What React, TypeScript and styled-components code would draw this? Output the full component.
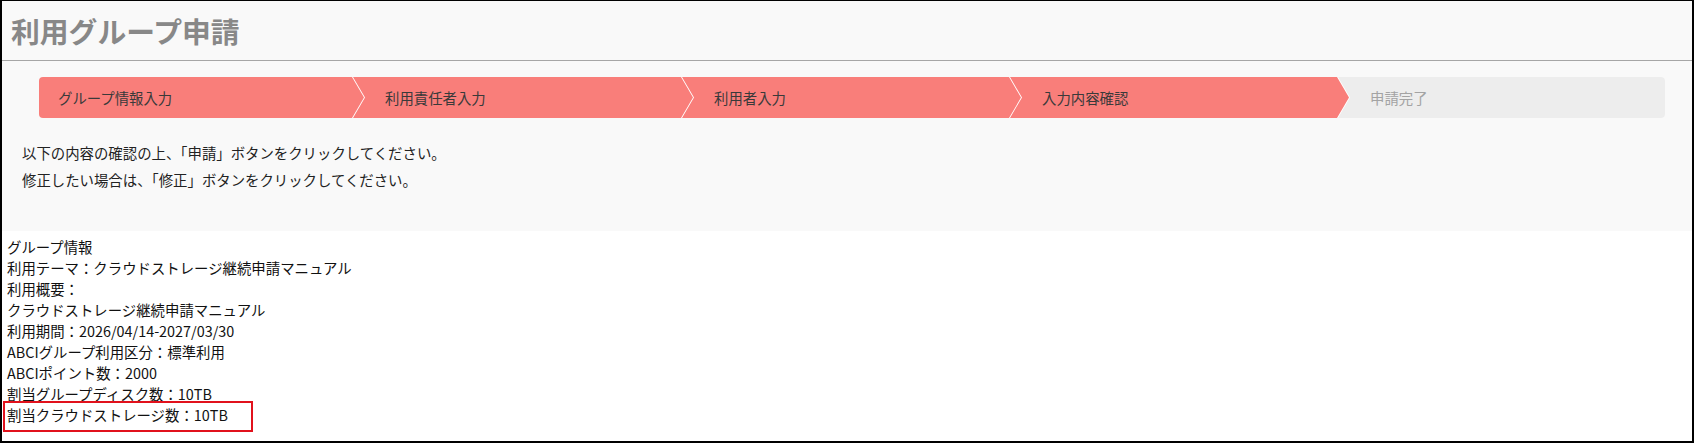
import styled, { createGlobalStyle } from 'styled-components';

const GlobalStyle = createGlobalStyle`
  body {
    margin: 0;
    background: #fff;
    font-family: "Noto Sans CJK JP", "Noto Sans", sans-serif;
  }
`;

const Frame = styled.div`
  width: 1694px;
  height: 443px;
  box-sizing: border-box;
  border: solid #000;
  border-width: 1px 2px 2px 2px;
  background: #fff;
  overflow: hidden;
`;

const TopPanel = styled.div`
  height: 230px;
  background: #f9f9f9;
`;

const Header = styled.div`
  height: 59px;
  border-bottom: 1px solid #a6a6a6;
  padding-left: 9px;
`;

const Title = styled.h1`
  margin: 0;
  font-size: 28.8px;
  font-weight: 700;
  line-height: 59px;
  color: #888;
`;

const Steps = styled.div`
  display: flex;
  height: 41px;
  margin: 16px 27px 0 37px;
  border-radius: 4px;
  overflow: hidden;
  background: #fff;
`;

type StepProps = { $w?: number; $pos: 'first' | 'mid' | 'last'; $done: boolean };

const clips = {
  first: 'polygon(0 0, calc(100% - 12px) 0, 100% 50%, calc(100% - 12px) 100%, 0 100%)',
  mid: 'polygon(0 0, calc(100% - 12px) 0, 100% 50%, calc(100% - 12px) 100%, 0 100%, 12px 50%)',
  last: 'polygon(0 0, 100% 0, 100% 100%, 0 100%, 12px 50%)',
};

const Step = styled.div<StepProps>`
  display: flex;
  align-items: center;
  box-sizing: border-box;
  flex: ${(p) => (p.$w ? `0 0 ${p.$w}px` : '1 1 auto')};
  margin-left: ${(p) => (p.$pos === 'first' ? '0' : '-11px')};
  padding-left: ${(p) => (p.$pos === 'first' ? '19px' : '32px')};
  clip-path: ${(p) => clips[p.$pos]};
  background: ${(p) => (p.$done ? '#f97e7a' : '#ededed')};
  color: ${(p) => (p.$done ? '#3a3a3a' : '#a3a3a3')};
  font-size: 14.4px;
`;

const Notice = styled.div`
  margin-top: 21px;
  padding-left: 20px;
  font-size: 14.4px;
  line-height: 27px;
  color: #222;
`;

const Info = styled.div`
  padding: 5px 0 0 5px;
  font-size: 14.4px;
  line-height: 21px;
  color: #111;
`;

const Marked = styled.div`
  position: relative;

  &::after {
    content: '';
    position: absolute;
    left: -4px;
    top: -3px;
    width: 250px;
    height: 31px;
    box-sizing: border-box;
    border: 2px solid #e1111c;
  }
`;

const steps = [
  { label: 'グループ情報入力', w: 325, done: true },
  { label: '利用責任者入力', w: 340, done: true },
  { label: '利用者入力', w: 339, done: true },
  { label: '入力内容確認', w: 339, done: true },
  { label: '申請完了', done: false },
];

const info = [
  'グループ情報',
  '利用テーマ：クラウドストレージ継続申請マニュアル',
  '利用概要：',
  'クラウドストレージ継続申請マニュアル',
  '利用期間：2026/04/14-2027/03/30',
  'ABCIグループ利用区分：標準利用',
  'ABCIポイント数：2000',
  '割当グループディスク数：10TB',
];

export default function App() {
  return (
    <>
      <GlobalStyle />
      <Frame>
        <TopPanel>
          <Header>
            <Title>利用グループ申請</Title>
          </Header>
          <Steps>
            {steps.map((s, i) => (
              <Step
                key={s.label}
                $w={s.w}
                $done={s.done}
                $pos={i === 0 ? 'first' : i === steps.length - 1 ? 'last' : 'mid'}
              >
                {s.label}
              </Step>
            ))}
          </Steps>
          <Notice>
            <div>以下の内容の確認の上、「申請」ボタンをクリックしてください。</div>
            <div>修正したい場合は、「修正」ボタンをクリックしてください。</div>
          </Notice>
        </TopPanel>
        <Info>
          {info.map((line) => (
            <div key={line}>{line}</div>
          ))}
          <Marked>割当クラウドストレージ数：10TB</Marked>
        </Info>
      </Frame>
    </>
  );
}
